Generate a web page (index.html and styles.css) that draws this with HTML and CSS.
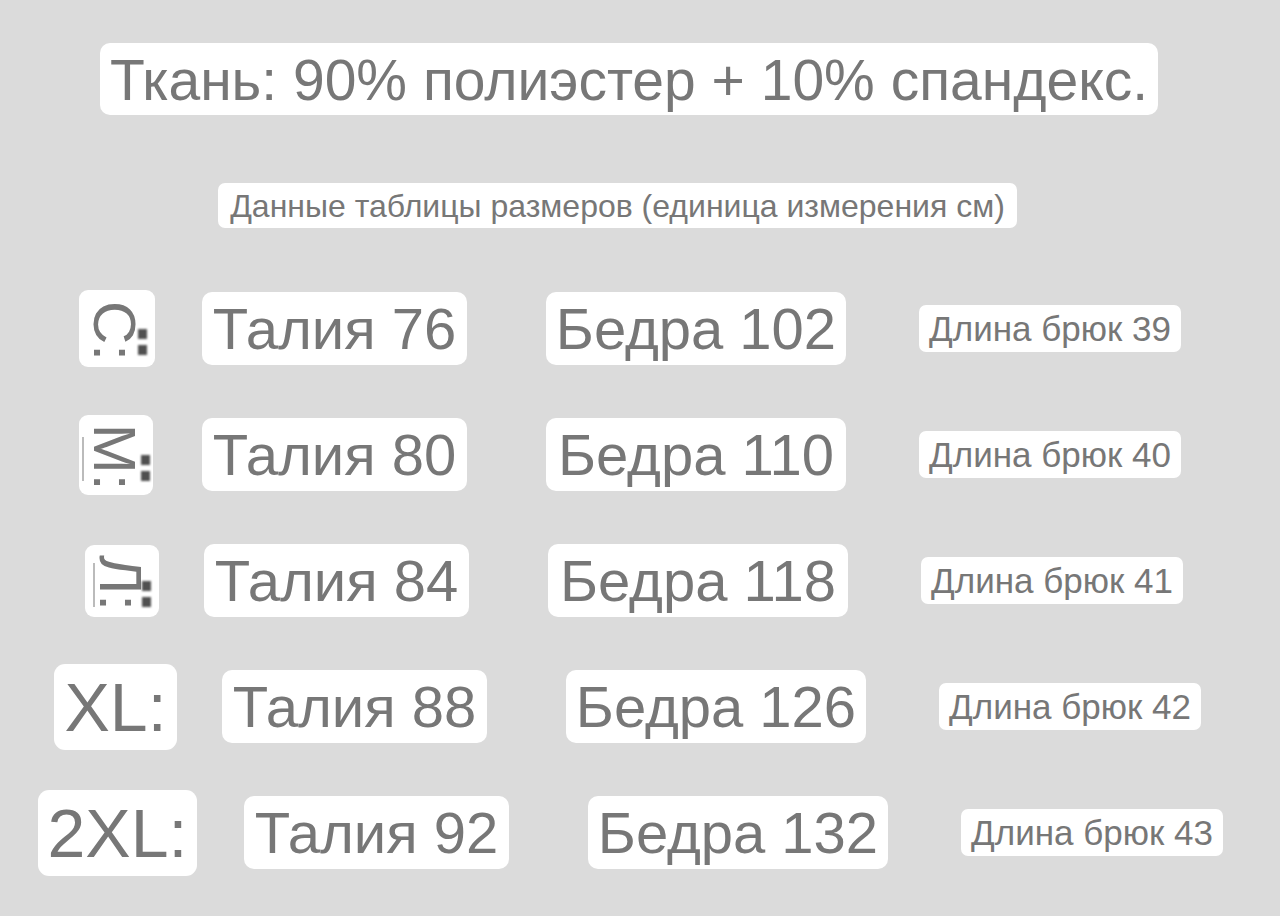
FILE: index.html
```html
<!DOCTYPE html>
<html lang="ru">
<head>
<meta charset="utf-8">
<title>Таблица размеров</title>
<link rel="stylesheet" href="styles.css">
</head>
<body>
<main class="page">
  <div class="head"><div class="title">Ткань: 90% полиэстер + 10% спандекс.</div></div>
  <div class="sub-wrap"><div class="subtitle">Данные таблицы размеров (единица измерения см)</div></div>

  <section class="rows">
    <div class="row row--1">
      <div class="slot"><div class="lbl lbl--rot"><span class="rot">С:</span><span class="dots"><i></i><i></i></span></div></div>
      <div class="cell talia">Талия 76</div>
      <div class="cell bedra">Бедра 102</div>
      <div class="cell dlina">Длина брюк 39</div>
    </div>
    <div class="row row--2">
      <div class="slot"><div class="lbl lbl--rot"><span class="bar"></span><span class="rot">M:</span><span class="dots"><i></i><i></i></span></div></div>
      <div class="cell talia">Талия 80</div>
      <div class="cell bedra">Бедра 110</div>
      <div class="cell dlina">Длина брюк 40</div>
    </div>
    <div class="row row--3">
      <div class="slot"><div class="lbl lbl--rot"><span class="bar"></span><span class="rot">Л:</span><span class="dots"><i></i><i></i></span></div></div>
      <div class="cell talia">Талия 84</div>
      <div class="cell bedra">Бедра 118</div>
      <div class="cell dlina">Длина брюк 41</div>
    </div>
    <div class="row row--4">
      <div class="slot"><div class="lbl lbl--big">XL:</div></div>
      <div class="cell talia">Талия 88</div>
      <div class="cell bedra">Бедра 126</div>
      <div class="cell dlina">Длина брюк 42</div>
    </div>
    <div class="row row--5">
      <div class="slot"><div class="lbl lbl--big lbl--2xl">2XL:</div></div>
      <div class="cell talia">Талия 92</div>
      <div class="cell bedra">Бедра 132</div>
      <div class="cell dlina">Длина брюк 43</div>
    </div>
  </section>
</main>
</body>
</html>
```

FILE: styles.css
```css
html, body {
  margin: 0;
  padding: 0;
}
body {
  width: 1280px;
  height: 916px;
  overflow: hidden;
  background: #dbdbdb;
  font-family: "Liberation Sans", Arial, sans-serif;
  color: #777777;
}
.page {
  display: flex;
  flex-direction: column;
  padding-top: 43px;
}
.head {
  display: flex;
  padding-left: 100px;
}
.title {
  background: #fff;
  border-radius: 10px;
  font-size: 57px;
  line-height: 74px;
  height: 72px;
  width: 1058px;
  text-align: center;
  white-space: nowrap;
}
.sub-wrap {
  display: flex;
  padding-left: 218px;
  margin-top: 68px;
}
.subtitle {
  background: #fff;
  border-radius: 7px;
  font-size: 32px;
  line-height: 47px;
  height: 45px;
  width: 799px;
  text-align: center;
  white-space: nowrap;
}
.rows {
  display: flex;
  flex-direction: column;
  gap: 53px;
  margin-top: 64px;
}
.row {
  display: flex;
  align-items: center;
  height: 73px;
}
.row--3 { padding-left: 2px; }
.row--4 { padding-left: 20px; }
.row--5 { padding-left: 42px; }

.slot {
  width: 155px;
  flex: none;
  display: flex;
  justify-content: flex-end;
  align-items: center;
}
.lbl {
  background: #fff;
  border-radius: 9px;
  display: flex;
  align-items: center;
  justify-content: center;
}
.lbl--rot {
  width: 76px;
  height: 77px;
}
.row--2 .lbl--rot { width: 74px; height: 80px; margin-right: 2px; }
.row--3 .lbl--rot { width: 74px; height: 72px; margin-right: -2px; }
.rot {
  display: inline-block;
  transform: rotate(90deg);
  font-size: 60px;
  line-height: 1;
  margin-left: -4px;
  margin-top: 4px;
}
.row--2 .rot, .row--3 .rot { font-size: 60px; }
.dots {
  display: flex;
  flex-direction: column;
  gap: 6px;
  margin-top: 26px;
  margin-left: -6px;
}
.dots i {
  display: block;
  width: 9px;
  height: 10px;
  background: #505050;
  filter: blur(1.2px);
}
.bar {
  display: block;
  width: 2px;
  height: 44px;
  background: #bbb;
  margin-right: 1px;
  margin-top: 8px;
}
.lbl--big {
  font-size: 68px;
  height: 86px;
  width: 123px;
  border-radius: 11px;
  margin-right: -2px;
}
.lbl--2xl {
  width: 161px;
  height: 86px;
  margin-right: 0;
}
.row--5 .slot { margin-left: -4px; width: 159px; }

.cell {
  background: #fff;
  border-radius: 10px;
  height: 73px;
  line-height: 73px;
  text-align: center;
  white-space: nowrap;
  flex: none;
}
.talia {
  font-size: 58px;
  width: 265px;
  margin-left: 47px;
}
.bedra {
  font-size: 58px;
  width: 300px;
  margin-left: 79px;
}
.dlina {
  font-size: 35px;
  width: 262px;
  height: 47px;
  line-height: 47px;
  border-radius: 7px;
  margin-left: 73px;
}
```
